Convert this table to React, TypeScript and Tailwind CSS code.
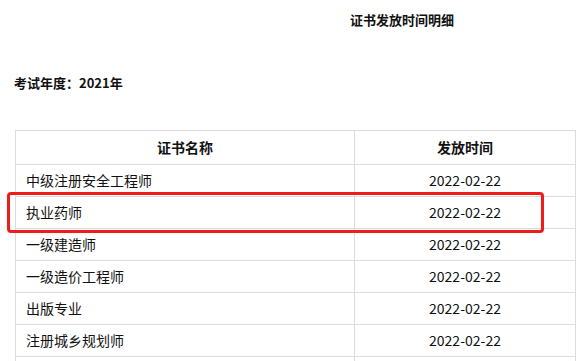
const rows = [
  '中级注册安全工程师',
  '执业药师',
  '一级建造师',
  '一级造价工程师',
  '出版专业',
  '注册城乡规划师',
];

export default function App() {
  return (
    <div
      className="relative w-[576px] h-[361px] overflow-hidden bg-white text-[#111]"
      style={{ fontFamily: '"Noto Sans CJK SC", "Noto Sans", sans-serif' }}
    >
      {/* Title */}
      <div className="pt-[10px] pl-[350px] text-[13px] font-bold leading-[20px]">证书发放时间明细</div>

      {/* Year */}
      <div className="mt-[43px] pl-[14px] text-[13px] font-bold leading-[20px]">考试年度：2021年</div>

      {/* Table */}
      <table className="ml-[15px] mt-[37px] w-[561px] border-collapse text-[14px]">
        <thead>
          <tr className="h-[34px]">
            <th className="w-[339px] border border-[#dcdcdc] font-bold">证书名称</th>
            <th className="border border-[#dcdcdc] font-bold">发放时间</th>
          </tr>
        </thead>
        <tbody>
          {rows.map((name) => (
            <tr key={name} className="h-[32px]">
              <td className="border border-[#dcdcdc] pl-[10px]">{name}</td>
              <td className="border border-[#dcdcdc] text-center">2022-02-22</td>
            </tr>
          ))}
          <tr className="h-[32px]">
            <td className="border border-[#dcdcdc]" />
            <td className="border border-[#dcdcdc]" />
          </tr>
        </tbody>
      </table>

      {/* Highlight box */}
      <div className="absolute left-[7px] top-[192px] w-[537px] h-[41px] border-[3px] border-[#f01c1c] rounded-[4px]" />
    </div>
  );
}
